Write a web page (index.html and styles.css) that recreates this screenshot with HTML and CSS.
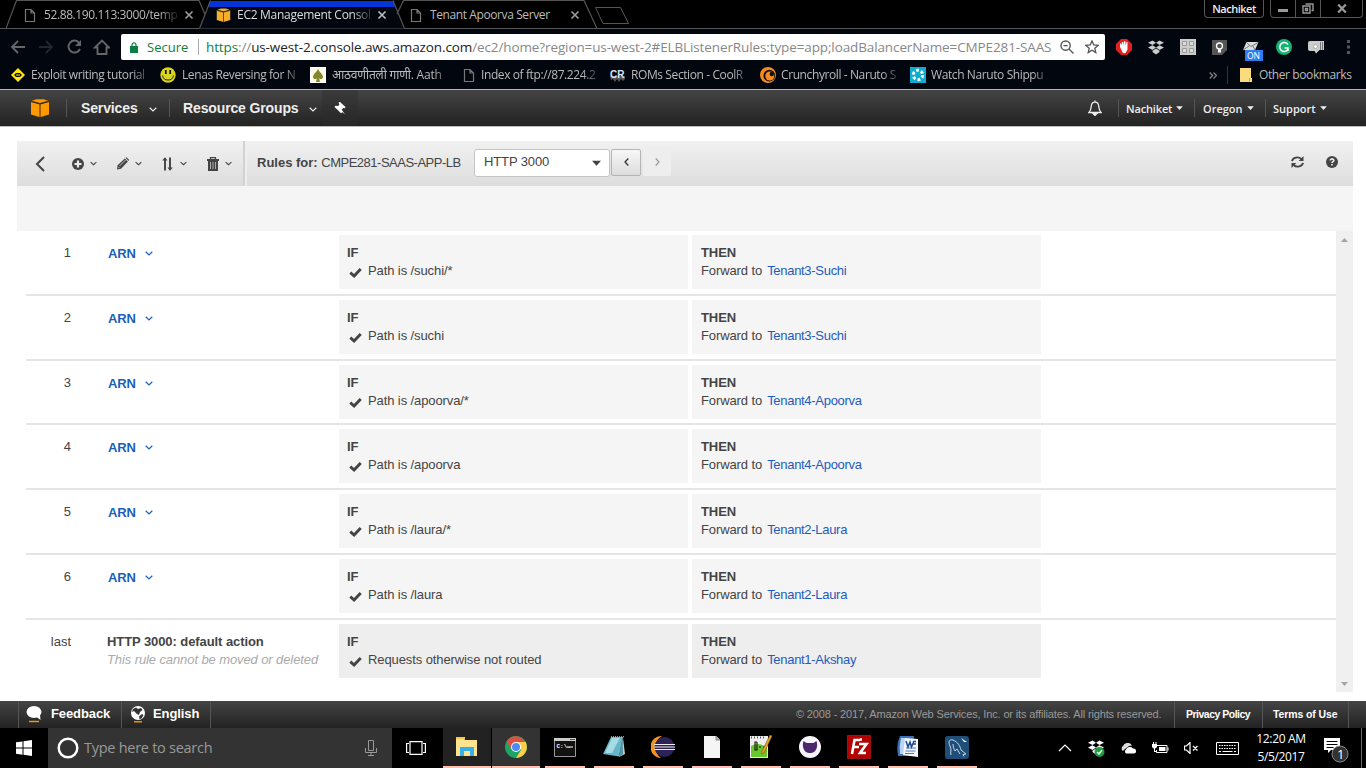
FILE: index.html
```html
<!DOCTYPE html>
<html lang="en">
<head>
<meta charset="utf-8">
<title>EC2 Management Console</title>
<link rel="stylesheet" href="styles.css">
</head>
<body>
<svg class="defs" aria-hidden="true">
  <defs>
    <symbol id="page" viewBox="0 0 12 15"><path d="M1.500 1.500h5.500l3.500 3.500v8.500h-9zM7 1.500v3.500h3.500" fill="none" stroke="currentColor" stroke-width="1.200"/></symbol>
    <symbol id="cross" viewBox="0 0 10 10"><path d="M1.500 1.500l7 7M8.500 1.500l-7 7" stroke="currentColor" stroke-width="1.700"/></symbol>
    <symbol id="cube" viewBox="0 0 20 19"><path d="M1 2.600L10 5.300v13L1 15.600zM19 2.600L10 5.300v13l9-2.700z" fill="currentColor"/><path d="M1.800 1.800L6.500.3h7l4.700 1.500L10 4.100z" fill="currentColor"/><path d="M1 2.600l9 2.400 9-2.400M10 5v14" fill="none" stroke="#3a2a10" stroke-width="1"/></symbol>
    <symbol id="down" viewBox="0 0 8 5"><path d="M.7.8L4 3.900 7.300.8" fill="none" stroke="currentColor" stroke-width="1.200"/></symbol>
    <symbol id="caret" viewBox="0 0 10 6"><path d="M0 .5h10L5 6z" fill="currentColor"/></symbol>
    <symbol id="check" viewBox="0 0 13 11"><path d="M1.300 5.600l3.800 3.400L11.700 2" fill="none" stroke="currentColor" stroke-width="2.900"/></symbol>
    <symbol id="dropbox" viewBox="0 0 16 15"><path d="M4.500.5L8 2.800 4.500 5.100 0 2.800zM11.500.5L16 2.800l-4.500 2.300L8 2.800zM0 7.600l4.500-2.400L8 7.600 4.500 10zM16 7.600l-4.500-2.400L8 7.600l3.500 2.400zM4.500 10.700L8 8.600l3.500 2.100v1.400L8 14.500l-3.500-2.400z" fill="currentColor"/></symbol>
  </defs>
</svg>

<header class="browser">
  <div class="tabstrip">
    <svg class="tab-shapes" viewBox="0 0 640 29">
      <path d="M199 28.500L210 1h183l11.500 27.500z" fill="#02060e"/>
      <path d="M210 1h183l2.500 6h-188z" fill="#0433d8"/>
      <path d="M0 28.500h6L16.500.5H199l6 14M199.500 28.500L210.500.5M393 .5l11.500 28M397 14L403.500.5H584l13 28h43" fill="none" stroke="#555" stroke-width="1.200"/>
      <path d="M595.500 7.500h25L628.500 23.500h-25.500z" fill="none" stroke="#555"/>
    </svg>
    <div class="tab tab-a"><svg class="i-page"><use href="#page"/></svg><span class="tab-title fade">52.88.190.113:3000/temp</span><svg class="i-cross"><use href="#cross"/></svg></div>
    <div class="tab tab-b"><svg class="i-tabcube"><use href="#cube"/></svg><span class="tab-title fade">EC2 Management Consol</span><svg class="i-cross"><use href="#cross"/></svg></div>
    <div class="tab tab-c"><svg class="i-page"><use href="#page"/></svg><span class="tab-title">Tenant Apoorva Server</span><svg class="i-cross"><use href="#cross"/></svg></div>
    <div class="profile">Nachiket</div>
    <div class="winbtns">
      <span><svg width="10" height="3"><path d="M0 0h10v3H0z" fill="#999"/></svg></span>
      <span><svg width="12" height="11" viewBox="0 0 12 11"><path d="M1 3h7v7H1zM3.500 1H11v6.500H9.500M3.500 5.500h2v2h-2z" fill="none" stroke="#999" stroke-width="1.400"/></svg></span>
      <span><svg width="10" height="9" viewBox="0 0 10 9"><path d="M1.200.5l7.600 8M8.800.5l-7.600 8" stroke="#999" stroke-width="2.200"/></svg></span>
    </div>
  </div>

  <div class="toolbar">
    <svg class="navicons" viewBox="0 0 110 26" fill="none" stroke="#666" stroke-width="1.900">
      <path d="M25 13H13M18 7l-6 6 6 6"/><path d="M39 13h12M46 7l6 6-6 6" stroke="#242629"/>
      <path d="M79.200 8.800A6 6 0 1 0 80 15"/><path d="M81 6v6h-6z" fill="#666" stroke="none"/>
      <path d="M95 13.500l7-7 7 7h-2.500V20h-9v-6.500z"/>
    </svg>
    <div class="address">
      <svg class="i-lock" viewBox="0 0 8 11"><path d="M0 4h8v7H0z" fill="#0b8043"/><path d="M2 4.500V2.800a2 2 0 0 1 4 0v1.700" fill="none" stroke="#0b8043" stroke-width="1.200"/></svg>
      <span class="secure">Secure</span>
      <span class="url"><span class="g">https</span>://<b>us-west-2.console.aws.amazon.com</b>/ec2/home?region=us-west-2#ELBListenerRules:type=app;loadBalancerName=CMPE281-SAAS</span>
      <svg class="i-mag" viewBox="0 0 14 14" fill="none" stroke="#555" stroke-width="1.400"><circle cx="5.600" cy="5.600" r="4.600"/><path d="M9 9l4.500 4.500M3.500 5.600h4.200"/></svg>
      <svg class="i-star" viewBox="0 0 14 14" fill="none" stroke="#555" stroke-width="1.300"><path d="M7 1l1.800 4 4.300.4-3.300 2.900 1 4.300L7 10.300l-3.800 2.300 1-4.300L.9 5.400 5.200 5z"/></svg>
    </div>
    <div class="extensions">
      <svg width="16" height="16" viewBox="0 0 16 16"><path d="M5 0h6l5 5v6l-5 5H5l-5-5V5z" fill="#e32020"/><path d="M4 8V4.500h1.200V7L6 3h1.300l.3 3.500L8.200 2h1.200l.2 4.500L10.500 3h1v7.500L9.500 14H7z" fill="#fff"/></svg>
      <svg width="16" height="15" color="#ccc"><use href="#dropbox"/></svg>
      <svg width="16" height="16" viewBox="0 0 16 16"><path d="M0 0h16v16H0z" fill="#ccc"/><path d="M2.500 2.500h4v4h-4zM9.500 2.500h4v4h-4zM2.500 9.500h4v4h-4zM9.500 9.500h4v4h-4z" fill="#ddd" stroke="#999"/></svg>
      <svg width="15" height="15" viewBox="0 0 15 15"><path d="M0 0h15v10l-5 5H0z" fill="#555"/><circle cx="7.500" cy="6" r="3" fill="none" stroke="#fff" stroke-width="1.300"/><path d="M6 9.500h3v3H6z" fill="#fff"/></svg>
      <svg width="20" height="21" viewBox="0 0 20 21"><path d="M3.500 2h12l-3.500 8H0z" fill="#ddd"/><path d="M3.500 2.500L8 6.500l7-4M0 10l6-4M12 10l-2-4" fill="none" stroke="#777"/><path d="M2 10h18v11H2z" fill="#2f7cf0"/><text x="4" y="19" class="on">ON</text></svg>
      <svg width="16" height="16" viewBox="0 0 16 16"><circle cx="8" cy="8" r="8" fill="#15b371"/><path d="M12 5.500A4.500 4.500 0 1 0 12 10.500V9H8.500M12 9v3" fill="none" stroke="#fff" stroke-width="1.500"/></svg>
      <svg width="17" height="14" viewBox="0 0 17 14"><path d="M2 1h14v9h-4.500L8 13.500 6.500 11H2Q0 11 0 9V3Q0 1 2 1z" fill="#ccc"/><path d="M12.500 2v8M14.500 2v8" stroke="#777"/><circle cx="7.500" cy="6.500" r="2" fill="#fff" stroke="#aaa"/></svg>
      <svg width="3" height="14" viewBox="0 0 3 14" fill="#555"><path d="M0 0h3v3H0zM0 5.500h3v3H0zM0 11h3v3H0z"/></svg>
    </div>
  </div>

  <div class="bookmarks">
    <div class="bm"><svg width="14" height="14" viewBox="0 0 14 14"><path d="M7 0l7 7-7 7-7-7z" fill="#ffe713"/><path d="M3 7l2-2h4l2 2-2 2H5z" fill="#111"/><path d="M5 7h4" stroke="#fe1"/></svg><span class="fade">Exploit writing tutorial</span></div>
    <div class="bm"><svg width="16" height="16" viewBox="0 0 16 16"><circle cx="8" cy="8" r="7.700" fill="#d8d51d"/><path d="M5.800 3v4M10.200 3v4" stroke="#111" stroke-width="1.700"/><path d="M2.500 8.500a5.600 5.600 0 0 0 11 0" fill="none" stroke="#222"/></svg><span class="fade">Lenas Reversing for N</span></div>
    <div class="bm"><svg width="16" height="16" viewBox="0 0 16 16"><path d="M0 0h16v16H0z" fill="#fff"/><path d="M1 1h14v14H1z" fill="#fafae8"/><path d="M8 2c1 3 5 5 5 8 0 2-3 3-4 1l1 4H6l1-4c-1 2-4 1-4-1 0-3 4-5 5-8z" fill="#85852a"/></svg><span class="fade deva">आठवणीतली गाणी. Aath</span></div>
    <div class="bm"><svg class="i-page"><use href="#page"/></svg><span class="fade">Index of ftp://87.224.2</span></div>
    <div class="bm"><svg width="15" height="14" viewBox="0 0 15 14"><path d="M0 8h15v3l-2 2-2-2-2 3-2-3-2 3-2-3-2 1z" fill="#555"/><text x="0" y="10" class="cr">CR</text></svg><span class="fade">ROMs Section - CoolR</span></div>
    <div class="bm"><svg width="16" height="16" viewBox="0 0 16 16"><circle cx="8" cy="8" r="8" fill="#f68b1f"/><circle cx="9.300" cy="8.700" r="5.900" fill="#111"/><circle cx="9.800" cy="9" r="4.500" fill="#f68b1f"/><circle cx="11.800" cy="7" r="2.200" fill="#111"/></svg><span class="fade">Crunchyroll - Naruto S</span></div>
    <div class="bm"><svg width="16" height="16" viewBox="0 0 16 16"><path d="M0 0h16v16H0z" fill="#10acd1"/><circle cx="8" cy="8" r="4.700" fill="none" stroke="#fff" stroke-width="3" stroke-dasharray="2.800 2.120"/></svg><span class="fade">Watch Naruto Shippu</span></div>
    <div class="more"><svg width="8" height="7" viewBox="0 0 8 7"><path d="M.7.5l3 3-3 3M4.500.5l3 3-3 3" fill="none" stroke="#888" stroke-width="1.200"/></svg></div>
    <div class="other"><svg width="12" height="14" viewBox="0 0 12 14"><path d="M0 0h11v10h1v4H0z" fill="#fbdc7c"/><path d="M9.500 10v3.500" stroke="#c6a544"/></svg><span>Other bookmarks</span></div>
  </div>
</header>

<nav class="aws">
  <a class="home"><svg width="20" height="19"><use href="#cube"/></svg></a>
  <a class="menu m-services"><span>Services</span><svg class="i-down"><use href="#down"/></svg></a>
  <a class="menu m-groups"><span>Resource Groups</span><svg class="i-down"><use href="#down"/></svg></a>
  <a class="pin"><svg width="12" height="13" viewBox="0 0 12 13"><path d="M4.500.5L6 0l5.500 5-.7 1.300-1.600-.2-1.500 1.600.6 2.600-1.400.9L3.800 8 .5 5l1-1.300 2.600.3 1.300-1.400zM6.500 8.500L8 8l3 4.500z" fill="#fff"/></svg></a>
  <div class="right">
    <a class="bell"><svg width="14" height="16" viewBox="0 0 14 16" fill="none" stroke="#eee" stroke-width="1.300"><path d="M1 12.500c2-2 2-4 2.300-6.500C3.600 3.500 5 2.200 7 2.200S10.400 3.500 10.700 6c.3 2.500.3 4.500 2.300 6.500zM7 2V.4"/><path d="M5 13.500h4L7 15.500z" fill="#eee"/></svg></a>
    <a class="m-user">Nachiket<svg class="i-caret"><use href="#caret"/></svg></a>
    <a class="m-region">Oregon<svg class="i-caret"><use href="#caret"/></svg></a>
    <a class="m-support">Support<svg class="i-caret"><use href="#caret"/></svg></a>
  </div>
</nav>

<main class="console">
  <div class="actions">
    <div class="tools">
      <svg class="back" width="10" height="16" viewBox="0 0 10 16"><path d="M9 1L2 8l7 7" fill="none" stroke="#444" stroke-width="2"/></svg>
      <div class="tool"><svg width="12" height="12" viewBox="0 0 12 12"><circle cx="6" cy="6" r="6" fill="#444"/><path d="M6 2.500v7M2.500 6h7" stroke="#eee" stroke-width="2.200"/></svg><svg class="i-mini"><use href="#down"/></svg></div>
      <div class="tool"><svg width="12" height="13" viewBox="0 0 12 13"><path d="M0 12.500l.6-4.200L7.800 1.400 10.900 4.500 4 11.700z" fill="#444"/><path d="M8.400.8l1-.6 2.700 2.700-.6 1z" fill="#444"/><path d="M2.500 9l6-6M1.500 10l1 1" stroke="#ddd" stroke-width=".8"/></svg><svg class="i-mini"><use href="#down"/></svg></div>
      <div class="tool"><svg width="12" height="14" viewBox="0 0 12 14"><path d="M3 1v12.500M8 .5V13" stroke="#444" stroke-width="1.900"/><path d="M.2 3.600L3 .3l2.500 3.300M5.500 10.400L8 13.700l2.800-3.300" fill="#444"/></svg><svg class="i-mini"><use href="#down"/></svg></div>
      <div class="tool"><svg width="12" height="14" viewBox="0 0 12 14"><path d="M0 2h12v2H0zM1 4h10v10H1z" fill="#444"/><path d="M3.500 2V.7h5V2" fill="none" stroke="#444" stroke-width="1.200"/><path d="M3.500 5v7M6 5v7M8.500 5v7" stroke="#aaa"/></svg><svg class="i-mini"><use href="#down"/></svg></div>
    </div>
    <div class="rules-for"><b>Rules for:</b> <span>CMPE281-SAAS-APP-LB</span></div>
    <div class="select"><span>HTTP 3000</span><svg width="9" height="6"><use href="#caret"/></svg></div>
    <button class="step"><svg width="5" height="8" viewBox="0 0 5 8"><path d="M4.300.5L1 4l3.300 3.500" fill="none" stroke="#333" stroke-width="1.300"/></svg></button>
    <button class="step off"><svg width="5" height="8" viewBox="0 0 5 8"><path d="M.7.5L4 4 .7 7.500" fill="none" stroke="#999" stroke-width="1.200"/></svg></button>
    <div class="end">
      <svg width="13" height="12" viewBox="0 0 13 12"><path d="M1 5.200A5.300 4.500 0 0 1 10.300 3M12 6.800A5.300 4.500 0 0 1 2.700 9" fill="none" stroke="#444" stroke-width="1.900"/><path d="M12.500 0v5H7.700zM.5 12V7h4.800z" fill="#444"/></svg>
      <svg width="12" height="12" viewBox="0 0 12 12"><circle cx="6" cy="6" r="6" fill="#444"/><path d="M4.200 4.600c0-2.200 3.600-2.200 3.600-.2 0 1.300-1.800 1.300-1.800 2.700M6 8v1.600" fill="none" stroke="#eee" stroke-width="1.600"/></svg>
    </div>
  </div>
  <div class="subbar"></div>
  <div class="body">
    <div class="rules">
      <section class="rule"><span class="num">1</span><a class="arn">ARN<svg class="i-arn"><use href="#down"/></svg></a><div class="card"><b>IF</b><p><svg class="i-check"><use href="#check"/></svg>Path is /suchi/*</p></div><div class="card"><b>THEN</b><p>Forward to <a>Tenant3-Suchi</a></p></div></section>
      <section class="rule"><span class="num">2</span><a class="arn">ARN<svg class="i-arn"><use href="#down"/></svg></a><div class="card"><b>IF</b><p><svg class="i-check"><use href="#check"/></svg>Path is /suchi</p></div><div class="card"><b>THEN</b><p>Forward to <a>Tenant3-Suchi</a></p></div></section>
      <section class="rule"><span class="num">3</span><a class="arn">ARN<svg class="i-arn"><use href="#down"/></svg></a><div class="card"><b>IF</b><p><svg class="i-check"><use href="#check"/></svg>Path is /apoorva/*</p></div><div class="card"><b>THEN</b><p>Forward to <a>Tenant4-Apoorva</a></p></div></section>
      <section class="rule"><span class="num">4</span><a class="arn">ARN<svg class="i-arn"><use href="#down"/></svg></a><div class="card"><b>IF</b><p><svg class="i-check"><use href="#check"/></svg>Path is /apoorva</p></div><div class="card"><b>THEN</b><p>Forward to <a>Tenant4-Apoorva</a></p></div></section>
      <section class="rule"><span class="num">5</span><a class="arn">ARN<svg class="i-arn"><use href="#down"/></svg></a><div class="card"><b>IF</b><p><svg class="i-check"><use href="#check"/></svg>Path is /laura/*</p></div><div class="card"><b>THEN</b><p>Forward to <a>Tenant2-Laura</a></p></div></section>
      <section class="rule"><span class="num">6</span><a class="arn">ARN<svg class="i-arn"><use href="#down"/></svg></a><div class="card"><b>IF</b><p><svg class="i-check"><use href="#check"/></svg>Path is /laura</p></div><div class="card"><b>THEN</b><p>Forward to <a>Tenant2-Laura</a></p></div></section>
      <section class="rule last"><span class="num">last</span><div class="default"><b>HTTP 3000: default action</b><i>This rule cannot be moved or deleted</i></div><div class="card"><b>IF</b><p><svg class="i-check"><use href="#check"/></svg>Requests otherwise not routed</p></div><div class="card"><b>THEN</b><p>Forward to <a>Tenant1-Akshay</a></p></div></section>
    </div>
    <div class="scroll">
      <svg width="7" height="4" viewBox="0 0 7 4"><path d="M3.500 0L7 4H0z" fill="#a3a3a3"/></svg>
      <svg width="7" height="4" viewBox="0 0 7 4"><path d="M0 0h7L3.500 4z" fill="#a3a3a3"/></svg>
    </div>
  </div>
</main>

<footer class="foot">
  <a class="f-feedback"><svg width="16" height="17" viewBox="0 0 16 17"><ellipse cx="8" cy="6" rx="7.500" ry="6" fill="#fff"/><path d="M8 9h6l.5 5z" fill="#fff"/><path d="M3 15.500h10" stroke="#f90" stroke-width="1.400"/></svg><span>Feedback</span></a>
  <a class="f-lang"><svg width="16" height="17" viewBox="0 0 16 17"><circle cx="8" cy="7" r="7" fill="#fff"/><path d="M3 3l3-1.500 2 1.500 3-1 1.500 2-2.500 2-1 3-2-1-3-3-2 1zM9 10.500l3-2.500 1.500 1-2 3.500-2 .5z" fill="#333"/><path d="M4 15.800h8" stroke="#f90" stroke-width="1.400"/></svg><span>English</span></a>
  <span class="copy">© 2008 - 2017, Amazon Web Services, Inc. or its affiliates. All rights reserved.</span>
  <a class="f-privacy"><span>Privacy Policy</span></a>
  <a class="f-terms"><span>Terms of Use</span></a>
</footer>

<div class="taskbar">
  <div class="start"><svg width="16" height="16" viewBox="0 0 16 16"><path d="M0 2.300L6.500 1.400v6.200H0zM7.500 1.200L16 0v7.600H7.500zM0 8.500h6.500v6.200L0 13.800zM7.500 8.500H16V16l-8.500-1.200z" fill="#fff"/></svg></div>
  <div class="search">
    <svg width="22" height="22" viewBox="0 0 22 22"><circle cx="11" cy="11" r="9.300" fill="none" stroke="#fff" stroke-width="2.500"/></svg>
    <span>Type here to search</span>
    <svg class="mic" width="12" height="16" viewBox="0 0 12 16" fill="none" stroke="#999"><path d="M3.500.5h5v10h-5zM.5 8v4.500h11V8M6 12.500v3M3 15.500h6"/></svg>
  </div>
  <div class="taskview"><svg width="20" height="14" viewBox="0 0 20 14" fill="none" stroke="#fff" stroke-width="1.200"><path d="M4 .7h12v12.600H4zM3 2.500H.6v9H3M17 2.500h2.400v9H17"/></svg></div>
  <div class="app explorer"><svg width="22" height="20" viewBox="0 0 22 20"><path d="M0 1h8l1 2h12v16H0z" fill="#ffe48f"/><path d="M0 0h9v2H0z" fill="#f6c944"/><path d="M4 10h14v9h-4v-5H8v5H4z" fill="#36b0e6"/></svg></div>
  <div class="app chrome"><svg width="22" height="22" viewBox="0 0 22 22"><circle cx="11" cy="11" r="11" fill="#1da462"/><path d="M1.500 5.500a11 11 0 0 1 19 .5L11 6.500 6.500 13.500z" fill="#dd5144"/><path d="M11 6h9.700A11 11 0 0 1 11 22l5-8z" fill="#ffcd46"/><circle cx="11" cy="11" r="5" fill="#fff"/><circle cx="11" cy="11" r="4" fill="#4c8bf5"/></svg></div>
  <div class="app"><svg width="22" height="19" viewBox="0 0 22 19"><path d="M.5.500h21v18H.5z" fill="#111" stroke="#999"/><path d="M0 0h22v3H0z" fill="#ccc"/><path d="M16 1.500h5" stroke="#555"/><text x="2.500" y="9.500" class="prompt">C:\.</text><path d="M13 9h6" stroke="#fff"/></svg></div>
  <div class="app"><svg width="22" height="22" viewBox="0 0 22 22"><path d="M8 1h12l-4 19.500L0 18z" fill="#67b5c9"/><path d="M9 2h8L9 17l-7 0z" fill="#a4dbe5"/><path d="M20 2l2 16-6 3z" fill="#d8c9a0"/><path d="M19.500 2l.5 16-4 3z" fill="#4997b0"/><path d="M8 .8h13" stroke="#ddd" stroke-dasharray="1 1"/></svg></div>
  <div class="app"><svg width="24" height="22" viewBox="0 0 24 22"><path d="M11 0A11 11 0 0 0 10 22 13 13 0 0 1 11 0z" fill="#f7941e"/><circle cx="13.500" cy="11" r="10" fill="#2c2255"/><path d="M3 8.500h21M3 11h21M3 13.500h21" stroke="#eee" stroke-width="1.200"/></svg></div>
  <div class="app"><svg width="16" height="22" viewBox="0 0 16 22"><path d="M0 0h12l4 4v18H0z" fill="#f5f5f5"/><path d="M12 0v4h4" fill="#bbb" stroke="#888"/></svg></div>
  <div class="app"><svg width="22" height="24" viewBox="0 0 22 24"><path d="M0 1h18v22H0z" fill="#eee"/><path d="M1 11q8-5 16 2v9H1z" fill="#69c72e"/><path d="M1 2.500h15" stroke="#555" stroke-dasharray="1 2" stroke-width="2"/><path d="M7 7H5v8h2V7M9 12h2M13 12h2" stroke="#111" stroke-width="1.100" fill="none"/><path d="M20 0l2 1-8 17-2.500 1 .5-3z" fill="#e5a423" stroke="#85501f" stroke-width=".6"/></svg></div>
  <div class="app"><svg width="22" height="22" viewBox="0 0 22 22"><circle cx="11" cy="11" r="11" fill="#f5f5fb"/><path d="M4.500 5l3 2h7l3-2c.8 3 .9 5 0 7.500C16 16 14 17 11 17s-5-1-6.500-4.500c-.9-2.500-.8-4.500 0-7.500z" fill="#4b276f"/></svg></div>
  <div class="app"><svg width="24" height="24" viewBox="0 0 24 24"><path d="M.5.500h23v23H.5z" fill="#b30000" stroke="#d22" stroke-dasharray="1 1"/><path d="M13 5H7.500L5 19M6.500 12H12M13 4.500h2M12 9h7.500L13 18h6" fill="none" stroke="#fff" stroke-width="2.600"/></svg></div>
  <div class="app"><svg width="22" height="22" viewBox="0 0 22 22"><path d="M3 0h14l-2 20H1Q-1 8 3 0z" fill="#3f70bd"/><path d="M4 2q-2 8-1 16h5V2z" fill="#b9d4f3"/><path d="M8 2l13 1v18L6 19z" fill="#f4f7fc"/><path d="M9 12h10M8.500 15h10M8 17.500h9" stroke="#5379b8"/><path d="M9 5l2 6 2-5 1.500 5L17 5M16 5.500h3M16 8h3" fill="none" stroke="#1c4794" stroke-width="1.500"/></svg></div>
  <div class="app"><svg width="24" height="23" viewBox="0 0 24 23"><rect width="24" height="23" rx="3" fill="#1f4f78"/><path d="M6 19c-1-3 1-5-1-9C3 6 4 3 8 4c5 2 7 6 8 10l5 4-3 .5 1 2M8 8c0 3 1 5 2 7l2-2 3 5" fill="none" stroke="#c6d7e4"/><path d="M16 2l6 4h-3z" fill="#fff"/></svg></div>
  <div class="tray">
    <svg class="t1" width="14" height="8" viewBox="0 0 14 8"><path d="M1 7l6-6 6 6" fill="none" stroke="#fff" stroke-width="1.200"/></svg>
    <svg class="t2" width="17" height="17" viewBox="0 0 17 17" color="#fff"><use href="#dropbox" width="16" height="15"/><circle cx="11.500" cy="12" r="5" fill="#1f9e3d"/><path d="M9 12l2 2 3-4" fill="none" stroke="#fff" stroke-width="1.300"/></svg>
    <svg class="t3" width="16" height="11" viewBox="0 0 16 11"><path d="M3 8a3 3 0 0 1 0-5 5 5 0 0 1 9-.5L9 3 5 6z" fill="#ddd"/><path d="M6 10.500a2.500 2.500 0 0 1 0-4 4 4 0 0 1 7-1 2.500 2.500 0 0 1 1 5z" fill="#fff"/></svg>
    <svg class="t4" width="17" height="12" viewBox="0 0 17 12"><path d="M5 3.500h10v7H4.500V8" fill="none" stroke="#fff"/><path d="M7 5h6.500v4H7zM15.500 5.500h1v3h-1zM0 2h5v3L3.500 6.500h-2L0 5zM1 0h1v2H1zM3.500 0h1v2h-1zM2 6h1v3h2v1H2z" fill="#fff"/></svg>
    <svg class="t5" width="15" height="12" viewBox="0 0 15 12" fill="none" stroke="#fff"><path d="M.5 4v4h2L6 11.500V.5L2.500 4zM9 4l4.500 4.500M13.500 4L9 8.500" stroke-width="1.200"/></svg>
    <svg class="t6" width="23" height="13" viewBox="0 0 23 13" fill="none" stroke="#fff"><path d="M.5.500h22v12H.5z"/><path d="M3 3.500h17M3 6.500h17" stroke-dasharray="1.500 1"/><path d="M3 9.500h2M6.500 9.500h10M18 9.500h2"/></svg>
    <div class="clock"><span>12:20 AM</span><span>5/5/2017</span></div>
    <svg class="t7" width="25" height="25" viewBox="0 0 25 25"><path d="M0 0h16v12H7l-3 3v-3H0z" fill="#fff"/><path d="M2.500 3.500h11M2.500 6.500h11M2.500 9.500h7" stroke="#000"/><circle cx="16" cy="16" r="8" fill="#333" stroke="#888"/><text x="13" y="20.500" class="badge">1</text></svg>
    <span class="peek"></span>
  </div>
</div>
</body>
</html>
```
FILE: styles.css
```css
* { box-sizing: border-box; }
body { margin: 0; width: 1366px; height: 768px; overflow: hidden; background: #fff; color: #444; font: 13px/18px "Liberation Sans", Arial, sans-serif; }
svg { display: block; flex: none; }
p { margin: 0; }
.defs { position: absolute; width: 0; height: 0; }

/* browser chrome */
.browser { height: 90px; background: #02060e; border-bottom: 1px solid #b5b5b5; font-family: "Open Sans", "Noto Sans", sans-serif; font-size: 12px; color: #bbb; }
.tabstrip { position: relative; display: flex; height: 29px; background: #000; border-bottom: 1px solid #555; }
.tab-shapes { position: absolute; left: 0; top: 0; width: 640px; height: 29px; }
.tab { position: relative; display: flex; align-items: center; padding-top: 2px; white-space: nowrap; }
.tab-a { width: 202px; padding-left: 24px; }
.tab-b { width: 195px; padding-left: 14px; }
.tab-c { width: 205px; padding-left: 13px; }
.tab-title { width: 133px; margin-left: 8px; overflow: hidden; letter-spacing: -.4px; }
.tab-b .tab-title { margin-left: 6px; width: 134px; color: #ddd; letter-spacing: -.28px; }
.tab-c .tab-title { margin-left: 8px; width: 135px; }
.i-page { width: 12px; height: 15px; color: #777; }
.i-tabcube { width: 15px; height: 15px; color: #f3ae2b; }
.i-cross { width: 10px; height: 10px; color: #999; margin-left: 7px; }
.tab-b .i-cross { margin-left: 6px; color: #bbb; }
.tab-c .i-cross { margin-left: 5px; }
.fade { mask-image: linear-gradient(90deg, #000 86%, transparent 103%); }
.profile { margin-left: 602px; width: 60px; height: 18px; border: 1px solid #555; border-top: 0; border-radius: 0 0 4px 4px; text-align: center; line-height: 17px; font-size: 11px; font-weight: 600; letter-spacing: -.5px; color: #eee; }
.winbtns { display: flex; margin-left: 6px; width: 93px; height: 18px; border: 1px solid #555; border-top: 0; border-radius: 0 0 4px 4px; }
.winbtns span { display: flex; align-items: center; justify-content: center; width: 25px; border-right: 1px solid #555; padding-bottom: 1px; }
.winbtns span:first-child { padding-top: 5px; }
.winbtns span:last-child { width: 41px; border: 0; }
.toolbar { display: flex; align-items: center; height: 36px; }
.navicons { width: 110px; height: 26px; }
.address { display: flex; align-items: center; width: 984px; height: 26px; margin-left: 11px; padding-left: 9px; background: #fff; border-radius: 2px; font-size: 14px; color: #888; white-space: nowrap; }
.i-lock { width: 8px; height: 11px; }
.secure { width: 52px; margin-left: 9px; padding-right: 9px; border-right: 1px solid #aaa; color: #0b8043; font-size: 13px; line-height: 16px; }
.url { width: 846px; margin-left: 7px; overflow: hidden; font-size: 13.500px; line-height: 20px; letter-spacing: -.115px; }
.url b { font-weight: 400; color: #222; }
.g { color: #0b8043; }
.i-mag { width: 14px; height: 14px; margin-left: 8px; }
.i-star { width: 14px; height: 14px; margin-left: 11px; }
.extensions { display: flex; align-items: center; gap: 16px; margin-left: 11px; }
.extensions svg:nth-child(5) { margin: 7px -3px 0 0; }
.extensions svg:nth-child(8) { margin-left: 6px; }
.on { font: 8.500px "Open Sans", sans-serif; fill: #fff; }
.bookmarks { display: flex; align-items: center; height: 20px; padding-left: 11px; white-space: nowrap; }
.bm { display: flex; align-items: center; width: 150px; }
.bm:first-child { width: 149px; }
.bm:nth-child(3) { width: 153px; }
.bm:nth-child(4) { width: 147px; }
.bm:nth-child(6) { width: 150px; }
.bm span { width: 118px; margin-left: 6px; overflow: hidden; letter-spacing: -.4px; }
.bm:nth-child(n+6) span { margin-left: 5px; }
.bm .deva { line-height: 18px; letter-spacing: -.2px; }
.cr { font: bold 10px "Liberation Sans", sans-serif; fill: #dde6ff; }
.more { margin-left: 149px; }
.other { display: flex; align-items: center; margin-left: 10px; padding-left: 12px; border-left: 1px solid #333; }
.other span { margin-left: 7px; letter-spacing: -.4px; }

/* console navigation */
.aws { display: flex; height: 37px; background: linear-gradient(#444, #222); border-bottom: 1px solid #bbb; color: #eee; font-weight: bold; font-size: 14px; }
.aws a { display: flex; align-items: center; white-space: nowrap; }
.home { width: 66px; padding-left: 30px; color: #f90; }
.menu::before, .m-user::before, .m-region::before, .m-support::before { content: ""; align-self: center; width: 1px; height: 18px; background: #555; }
.menu span { width: 56px; margin-left: 14px; letter-spacing: -.13px; }
.i-down { width: 8px; height: 5px; margin: 3px 0 0 12px; }
.m-services { width: 103px; }
.m-groups span { width: 114px; margin-left: 13px; }
.m-groups { width: 153px; }
.pin { width: 36px; padding-left: 12px; background: #2c2c2c66; }
.right { display: flex; margin-left: auto; font: 600 11px "Open Sans", sans-serif; }
.bell { width: 30px; }
.m-user::before, .m-region::before, .m-support::before { margin-right: 7px; }
.m-user { width: 76px; letter-spacing: -.15px; }
.m-region { width: 71px; }
.m-support { width: 101px; }
.m-region::before { margin-right: 8px; }
.i-caret { width: 7px; height: 4px; margin-left: 4px; }

/* rules view */
.console { height: 574px; padding: 14px 13px 0 17px; }
.actions { display: flex; align-items: center; height: 45px; padding-bottom: 2px; background: linear-gradient(#f1f1f1, #ddd); }
.tools { display: flex; align-items: center; align-self: flex-start; width: 228px; height: 45px; padding-left: 18px; border-right: 2px solid #d2d2d2; box-shadow: 2px 0 #eee; }
.back { margin-right: 27px; }
.tool { display: flex; align-items: center; flex: none; width: 45px; }
.tool:last-child { width: 30px; }
.i-mini { width: 7px; height: 5px; margin-left: 6px; }
.rules-for { width: 212px; margin-left: 12px; white-space: nowrap; }
.rules-for span { letter-spacing: -.5px; }
.select { display: flex; align-items: center; justify-content: space-between; width: 136px; height: 28px; margin-left: 5px; padding: 0 8px 0 9px; background: #fff; border: 1px solid #c4c4c4; border-radius: 3px; letter-spacing: -.12px; }
.select span { padding-bottom: 1px; }
.step { display: flex; align-items: center; justify-content: center; width: 30px; height: 27px; margin: 0 0 0 1px; padding: 0 0 2px; background: linear-gradient(#f7f7f7, #ddd); border: 1px solid #b4b4b4; border-radius: 2px; }
.step.off { margin-left: 2px; background: #eee; border-color: transparent; width: 28px; }
.end { display: flex; gap: 22px; margin: 0 15px 1px auto; }
.subbar { height: 45px; background: #f5f5f5; }
.body { display: flex; height: 461px; }
.rules { width: 1319px; padding-left: 9px; }
.rule { display: grid; grid-template-columns: 45px 268px 353px 349px; height: 64.800px; padding-top: 4px; border-bottom: 2px solid #e5e5e5; }
.rule.last { border: 0; }
.num { padding-top: 9px; text-align: right; }
.default { padding: 9px 0 0 36px; }
.arn { display: flex; height: 28px; color: #1a5fb9; font-weight: bold; letter-spacing: -.2px; padding: 10px 0 0 37px; }
.i-arn { width: 8px; height: 5px; margin: 6px 0 0 9px; }
.default b, .default i { display: block; white-space: nowrap; letter-spacing: -.08px; }
.default i { color: #aaa; letter-spacing: -.1px; }
.card { width: 349px; height: 54px; padding: 9px 8px 0; background: #f5f5f5; letter-spacing: -.1px; }
.card:last-child { padding-left: 9px; }
.last .card { background: #eee; }
.card b { display: block; }
.card p { display: flex; white-space: nowrap; }
.card a { margin-left: 5px; color: #1e5bbc; letter-spacing: -.3px; }
.i-check { width: 13px; height: 11px; margin: 5px 6px 0 2px; }
.scroll { display: flex; flex-direction: column; justify-content: space-between; align-items: center; width: 17px; padding: 7px 0 6px; background: #f0f0f0; }

/* console footer */
.foot { display: flex; height: 27px; padding-left: 18px; background: linear-gradient(#444, #222); color: #fff; font-weight: bold; white-space: nowrap; }
.foot a { display: flex; align-items: center; border-left: 1px solid #555; letter-spacing: -.1px; }
.foot a span { padding-bottom: 2px; }
.f-feedback { width: 103px; padding-left: 7px; }
.f-feedback span { margin-left: 9px; }
.f-lang { width: 90px; padding-left: 8px; border-right: 1px solid #555; }
.f-lang span { margin-left: 7px; }
.copy { width: 378px; margin-left: 585px; line-height: 27px; font-size: 11px; font-weight: 400; letter-spacing: -.145px; color: #999; }
.f-privacy { width: 88px; padding-left: 11px; font-size: 10.500px; }
.foot .f-privacy { letter-spacing: -.5px; }
.f-terms { width: 87px; padding-left: 10px; border-right: 1px solid #555; font-size: 10.500px; }
.f-privacy span, .f-terms span { padding-bottom: 0; }

/* taskbar */
.taskbar { display: flex; height: 40px; background: #000; color: #fff; font-family: "Open Sans", sans-serif; }
.start { display: flex; align-items: center; width: 48px; padding-left: 16px; }
.search { display: flex; align-items: center; width: 344px; padding-left: 9px; background: #333; color: #999; font-size: 14.500px; letter-spacing: -.27px; }
.search span { margin-left: 5px; width: 281px; }
.taskview { width: 51px; display: flex; align-items: center; padding-left: 14px; }
.app { display: flex; align-items: center; justify-content: center; width: 40px; height: 40px; margin-right: 9px; border-bottom: 2px solid #ffc1ad; }
.explorer { width: 48px; margin-right: 1px; background: #222; }
.chrome { width: 48px; margin-right: 5px; background: #333; }
.prompt { font: bold 6px "Liberation Mono", monospace; fill: #fff; }
.tray { display: flex; align-items: center; margin-left: auto; width: 308px; height: 40px; }
.t2 { margin-left: 16px; }
.t3 { margin-left: 15px; }
.t4 { margin-left: 16px; }
.t5 { margin-left: 15px; }
.t6 { margin-left: 17px; }
.clock { display: flex; flex-direction: column; align-items: center; width: 50px; margin: 0 0 1px 17px; font-size: 12px; line-height: 18px; letter-spacing: -.35px; white-space: nowrap; }
.t7 { margin: 4px 0 0 18px; }
.badge { font: 13px "Open Sans", sans-serif; fill: #fff; }
.peek { width: 1px; height: 40px; margin-left: 12px; background: #666; }
```
